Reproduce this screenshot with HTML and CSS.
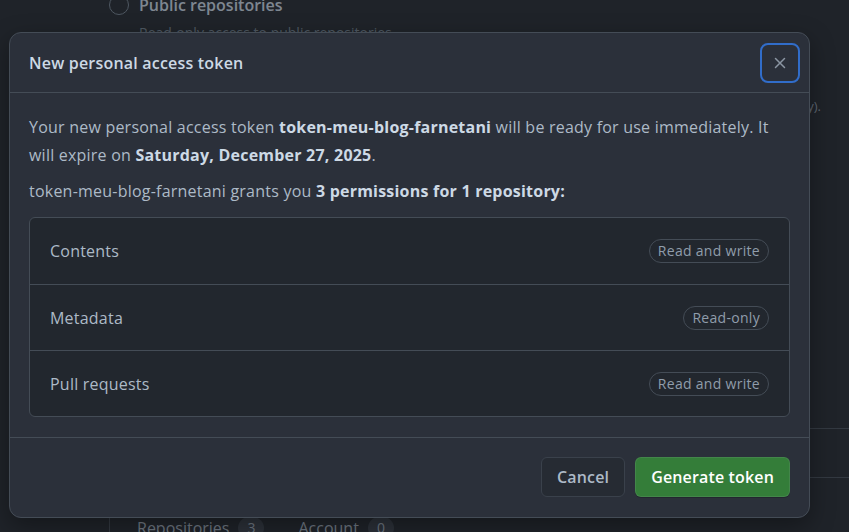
FILE: index.html
```html
<!DOCTYPE html>
<html lang="en">
<head>
<meta charset="utf-8">
<title>New personal access token</title>
<link rel="stylesheet" href="styles.css">
</head>
<body>
<div class="page">
  <div class="bg-option">
    <span class="radio"></span>
    <div class="option-text">
      <div class="option-title">Public repositories</div>
      <div class="option-desc">Read-only access to public repositories.</div>
    </div>
  </div>
  <div class="bg-trail">(read-only).</div>
  <div class="bg-panel">
    <div class="bg-rule"></div>
    <div class="bg-rule second"></div>
    <nav class="bg-tabs">
      <span class="tab">Repositories <span class="count">3</span></span>
      <span class="tab">Account <span class="count">0</span></span>
    </nav>
  </div>
</div>

<div class="dialog" role="dialog" aria-labelledby="dlg-title">
  <header class="dialog-header">
    <h1 id="dlg-title" class="dialog-title">New personal access token</h1>
    <button class="close-btn" aria-label="Close">
      <svg width="16" height="16" viewBox="0 0 16 16" aria-hidden="true">
        <path d="M3.5 3.5l9 9M12.5 3.5l-9 9" stroke="currentColor" stroke-width="1.5" stroke-linecap="round" fill="none"/>
      </svg>
    </button>
  </header>
  <div class="dialog-body">
    <p class="lead">Your new personal access token <strong>token-meu-blog-farnetani</strong> will be ready for use immediately. It will expire on <strong>Saturday, December 27, 2025</strong>.</p>
    <p class="grants">token-meu-blog-farnetani grants you <strong>3 permissions for 1 repository:</strong></p>
    <ul class="perm-list">
      <li class="perm-row"><span>Contents</span><span class="badge">Read and write</span></li>
      <li class="perm-row"><span>Metadata</span><span class="badge">Read-only</span></li>
      <li class="perm-row"><span>Pull requests</span><span class="badge">Read and write</span></li>
    </ul>
  </div>
  <footer class="dialog-footer">
    <button class="btn btn-default">Cancel</button>
    <button class="btn btn-primary">Generate token</button>
  </footer>
</div>
</body>
</html>
```

FILE: styles.css
```css
* { box-sizing: border-box; }

html, body {
  margin: 0;
  height: 100%;
}

body {
  background: #1f2329;
  font-family: "Open Sans", "Liberation Sans", Arial, sans-serif;
  color: #adbac7;
  overflow: hidden;
  position: relative;
}

/* ---------- dimmed background page ---------- */
.page {
  height: 539px;
  display: flex;
  flex-direction: column;
  opacity: 0.55;
}

.bg-option {
  display: flex;
  gap: 10px;
  margin-left: 109px;
  margin-top: -5px;
}

.radio {
  width: 20px;
  height: 20px;
  border: 1px solid #768390;
  border-radius: 50%;
  flex: none;
}

.option-title {
  font-weight: 600;
  font-size: 16px;
  line-height: 20px;
  color: #cdd9e5;
}

.option-desc {
  font-size: 14px;
  line-height: 20px;
  color: #768390;
  margin-top: 8px;
}

.bg-trail {
  align-self: flex-end;
  margin-right: 28px;
  margin-top: 54px;
  font-size: 13px;
  line-height: 18px;
  color: #909dab;
  white-space: nowrap;
}

.bg-panel {
  margin-left: 109px;
  margin-top: auto;
  display: flex;
  flex-direction: column;
}

.bg-rule {
  height: 1px;
  background: #444c56;
  margin-bottom: 48px;
}

.bg-rule.second {
  margin-bottom: 39px;
}

.bg-tabs {
  border-left: 1px solid #444c56;
  display: flex;
  gap: 34px;
  padding-left: 27px;
  height: 22px;
  font-size: 16px;
  line-height: 22px;
  color: #adbac7;
}

.tab {
  display: flex;
  gap: 9px;
  align-items: flex-start;
}

.count {
  background: #373e47;
  border-radius: 12px;
  padding: 0 9px;
  font-size: 14px;
}

/* ---------- dialog ---------- */
.dialog {
  position: absolute;
  left: 9px;
  top: 32px;
  width: 801px;
  background: #2b303a;
  border: 1px solid #444c56;
  border-radius: 12px;
  box-shadow: 0 8px 24px rgba(0, 0, 0, 0.35);
}

.dialog-header {
  height: 60px;
  display: flex;
  align-items: center;
  justify-content: space-between;
  padding: 0 9px 0 19px;
  border-bottom: 1px solid #444c56;
}

.dialog-title {
  margin: 0;
  font-size: 16px;
  font-weight: 600;
  letter-spacing: 0.2px;
  color: #cdd9e5;
}

.close-btn {
  width: 40px;
  height: 40px;
  border: 2px solid #316dca;
  border-radius: 8px;
  background: transparent;
  color: #8b96a3;
  display: flex;
  align-items: center;
  justify-content: center;
  padding: 0;
}

.dialog-body {
  padding: 20px 19px 20px;
  font-size: 16px;
  line-height: 28px;
  letter-spacing: 0.22px;
  color: #adbac7;
}

.dialog-body p {
  margin: 0;
}

.dialog-body strong {
  font-weight: 700;
  color: #cdd9e5;
}

.grants {
  margin-top: 8px !important;
}

.perm-list {
  list-style: none;
  margin: 12px 0 0;
  padding: 0;
  background: #22272e;
  border: 1px solid #444c56;
  border-radius: 6px;
}

.perm-row {
  height: 66px;
  display: flex;
  align-items: center;
  justify-content: space-between;
  padding: 0 20px;
  color: #adbac7;
}

.perm-row + .perm-row {
  border-top: 1px solid #444c56;
}

.badge {
  font-size: 14px;
  line-height: 22px;
  letter-spacing: 0.3px;
  padding: 0 8px;
  border: 1px solid #444c56;
  border-radius: 12px;
  color: #909dab;
}

.dialog-footer {
  display: flex;
  justify-content: flex-end;
  gap: 10px;
  padding: 19px 19px 20px;
  border-top: 1px solid #444c56;
}

.btn {
  height: 40px;
  padding: 0 15px;
  border-radius: 6px;
  font-family: inherit;
  font-size: 16px;
  font-weight: 600;
  letter-spacing: 0.15px;
}

.btn-default {
  background: #262b33;
  border: 1px solid #3a414b;
  color: #adbac7;
}

.btn-primary {
  background: #347d39;
  border: 1px solid rgba(205, 217, 229, 0.1);
  color: #ffffff;
  box-shadow: 0 1px 0 rgba(0, 0, 0, 0.2);
}
```
